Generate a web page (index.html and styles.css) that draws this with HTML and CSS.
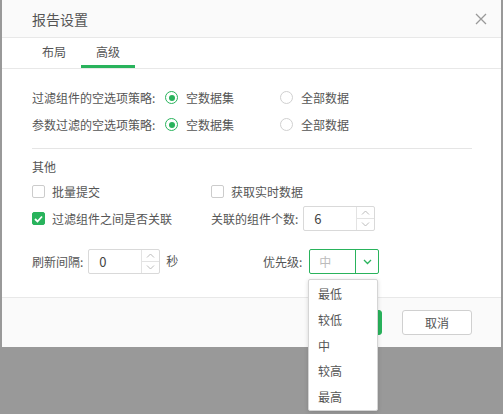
FILE: index.html
```html
<!DOCTYPE html>
<html lang="zh">
<head>
<meta charset="utf-8">
<link rel="stylesheet" href="styles.css">
</head>
<body>
<div class="dialog">
  <div class="header">
    <span class="title">报告设置</span>
    <svg class="close" width="12" height="12" viewBox="0 0 12 12"><path d="M1 1L11 11M11 1L1 11" stroke="#999" stroke-width="1.3" fill="none"/></svg>
  </div>
  <div class="tabs">
    <div class="tab">布局</div>
    <div class="tab active">高级</div>
  </div>
  <div class="content">
    <div class="row">
      <span class="label">过滤组件的空选项策略:</span>
      <span class="opt opt1"><span class="radio on"></span>空数据集</span>
      <span class="opt"><span class="radio"></span>全部数据</span>
    </div>
    <div class="row">
      <span class="label">参数过滤的空选项策略:</span>
      <span class="opt opt1"><span class="radio on"></span>空数据集</span>
      <span class="opt"><span class="radio"></span>全部数据</span>
    </div>
    <div class="divider"></div>
    <div class="row section">其他</div>
    <div class="row">
      <span class="col"><span class="check"></span>批量提交</span>
      <span class="col"><span class="check"></span>获取实时数据</span>
    </div>
    <div class="row">
      <span class="col"><span class="check on"><svg width="9" height="8" viewBox="0 0 9 8"><path d="M1 4L3.5 6.5L8 1.5" stroke="#fff" stroke-width="1.8" fill="none"/></svg></span>过滤组件之间是否关联</span>
      <span class="col">关联的组件个数:<span class="spin spin-gap"><span class="val">6</span><span class="arrows"><span class="ar"><svg width="9" height="5" viewBox="0 0 9 5"><path d="M1 4.5L4.5 1L8 4.5" stroke="#bbb" fill="none"/></svg></span><span class="ar"><svg width="9" height="5" viewBox="0 0 9 5"><path d="M1 0.5L4.5 4L8 0.5" stroke="#bbb" fill="none"/></svg></span></span></span></span>
    </div>
    <div class="row row-last">
      <span class="col col-refresh">刷新间隔:<span class="spin spin-gap2"><span class="val">0</span><span class="arrows"><span class="ar"><svg width="9" height="5" viewBox="0 0 9 5"><path d="M1 4.5L4.5 1L8 4.5" stroke="#bbb" fill="none"/></svg></span><span class="ar"><svg width="9" height="5" viewBox="0 0 9 5"><path d="M1 0.5L4.5 4L8 0.5" stroke="#bbb" fill="none"/></svg></span></span></span><span class="unit">秒</span></span>
      <span class="prio">优先级:<span class="select"><span class="sval">中</span><span class="sbtn"><svg width="9" height="6" viewBox="0 0 9 6"><path d="M1 1L4.5 4.5L8 1" stroke="#29b35c" stroke-width="1.3" fill="none"/></svg></span></span></span>
    </div>
  </div>
  <div class="footer">
    <button class="btn ok" aria-label="确定"></button>
    <button class="btn cancel">取消</button>
  </div>
  <div class="menu">
    <div class="item">最低</div>
    <div class="item">较低</div>
    <div class="item">中</div>
    <div class="item">较高</div>
    <div class="item">最高</div>
  </div>
</div>
</body>
</html>
```

FILE: styles.css
```css
* { box-sizing: border-box; }
html, body { margin: 0; padding: 0; }
body {
  background: #999;
  width: 503px;
  height: 414px;
  overflow: hidden;
  font-family: "Noto Sans CJK SC", "Noto Sans", sans-serif;
  font-size: 12px;
  color: #555;
}
.dialog {
  position: relative;
  margin-left: 2px;
  width: 499px;
  height: 347px;
  background: #fff;
  display: flex;
  flex-direction: column;
}
.header {
  height: 38px;
  background: #fafafa;
  border-bottom: 1px solid #e8e8e8;
  display: flex;
  align-items: center;
  justify-content: space-between;
  padding: 0 14px 0 30px;
}
.title { font-size: 14px; color: #555; }
.close { display: block; }
.tabs {
  height: 31px;
  border-bottom: 1px solid #e8e8e8;
  display: flex;
  padding-left: 25px;
}
.tab {
  width: 54px;
  text-align: center;
  line-height: 28px;
  font-size: 12px;
  color: #555;
}
.tab.active { border-bottom: 3px solid #29b35c; }
.content {
  flex: 1;
  padding: 15px 29px 0 30px;
}
.row {
  height: 27px;
  display: flex;
  align-items: center;
}
.label { width: 133px; }
.opt { display: flex; align-items: center; }
.opt1 { width: 115px; }
.radio {
  width: 13px;
  height: 13px;
  border: 1px solid #d0d0d0;
  border-radius: 50%;
  margin-right: 8px;
  position: relative;
}
.radio.on { border-color: #29b35c; }
.radio.on::after {
  content: "";
  position: absolute;
  left: 2.5px; top: 2.5px;
  width: 6px; height: 6px;
  border-radius: 50%;
  background: #29b35c;
}
.divider {
  height: 1px;
  background: #e5e5e5;
  margin: 10px 0 0 0;
}
.section { height: 24px; margin-top: 5px; }
.col { width: 179px; display: flex; align-items: center; }
.check {
  width: 13px;
  height: 13px;
  border: 1px solid #ccc;
  border-radius: 2px;
  margin-right: 7px;
  display: flex;
  align-items: center;
  justify-content: center;
}
.check.on { background: #29b35c; border-color: #29b35c; }
.check svg { display: block; }
.spin {
  width: 72px;
  height: 25px;
  border: 1px solid #d9d9d9;
  border-radius: 2px;
  display: flex;
}
.spin-gap { margin-left: 5px; }
.spin-gap2 { margin-left: 5px; }
.val { flex: 1; padding-left: 10px; line-height: 23px; font-size: 13px; color: #444; }
.arrows {
  width: 18px;
  border-left: 1px solid #e3e3e3;
  display: flex;
  flex-direction: column;
}
.ar { flex: 1; display: flex; align-items: center; justify-content: center; }
.ar + .ar { border-top: 1px solid #e3e3e3; }
.ar svg { display: block; }
.row-last { margin-top: 16px; }
.col-refresh { width: 231px; }
.unit { margin-left: 6px; margin-top: -3px; }
.prio { display: flex; align-items: center; }
.select {
  margin-left: 7px;
  width: 70px;
  height: 25px;
  border: 1px solid #29b35c;
  border-radius: 2px;
  display: flex;
}
.sval { flex: 1; padding-left: 9px; line-height: 23px; color: #bbb; }
.sbtn {
  width: 23px;
  border-left: 1px solid #29b35c;
  display: flex;
  align-items: center;
  justify-content: center;
}
.sbtn svg { display: block; }
.footer {
  height: 50px;
  background: #fafafa;
  border-top: 1px solid #e8e8e8;
  display: flex;
  justify-content: flex-end;
  align-items: center;
  gap: 20px;
  padding-right: 29px;
  padding-bottom: 1px;
}
.btn {
  width: 70px;
  height: 25px;
  border-radius: 3px;
  font-family: inherit;
  font-size: 12px;
  padding: 0;
}
.ok { background: #29b35c; border: 1px solid #29b35c; color: #fff; }
.cancel { background: #fff; border: 1px solid #d0d0d0; color: #555; }
.menu {
  position: absolute;
  left: 306px;
  top: 279px;
  width: 70px;
  height: 132px;
  background: #fff;
  border: 1px solid #d5d5d5;
  border-radius: 2px;
  box-shadow: 0 1px 4px rgba(0,0,0,0.15);
  padding-top: 1px;
}
.item {
  height: 25.8px;
  line-height: 25.8px;
  padding-left: 9px;
  color: #555;
}
```
